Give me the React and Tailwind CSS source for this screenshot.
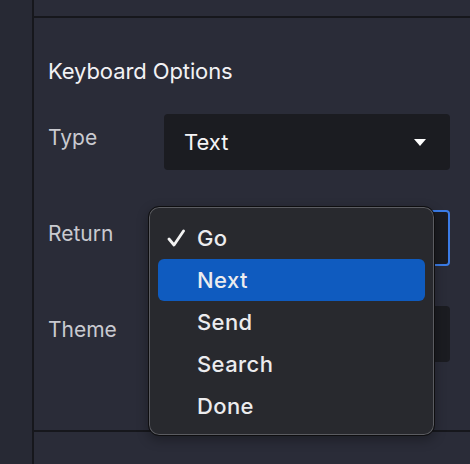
import React from "react";

function Caret() {
  return (
    <svg width="12" height="7" viewBox="0 0 12 7" className="shrink-0">
      <path d="M0 0 H12 L6 7 Z" fill="#ffffff" />
    </svg>
  );
}

function Check() {
  return (
    <svg width="18" height="18" viewBox="0 0 18 18" className="shrink-0">
      <path d="M2 10 L7 16 L16.5 2" fill="none" stroke="#f2f2f2" strokeWidth="2.8" strokeLinecap="round" strokeLinejoin="round" />
    </svg>
  );
}

const items = ["Go", "Next", "Send", "Search", "Done"];

export default function App() {
  return (
    <div
      className="relative flex w-[470px] h-[464px] overflow-hidden bg-[#282a35]"
      style={{ fontFamily: "Inter, 'Noto Sans', sans-serif" }}
    >
      <div className="w-[34px] shrink-0 bg-[#272934] border-r-2 border-[#16171c]" />
      <div className="flex-1 flex flex-col bg-[#2a2c38]">
        <div className="h-[18px] shrink-0 border-b-2 border-[#16171c]" />
        <div className="flex flex-col pl-[14px] pr-[20px] pt-[40px] h-[414px] shrink-0 border-b-2 border-[#16171c]">
          <div className="text-[22px] leading-[26px] text-[#f2f2f4] tracking-[-0.1px]">Keyboard Options</div>
          <div className="flex flex-col gap-[40px] mt-[30px]">
            <div className="flex items-center">
              <div className="w-[116px] text-[21px] text-[#c9cad0] -mt-[8px]">Type</div>
              <div className="flex-1 h-[56px] rounded-[4px] bg-[#1b1c21] flex items-center justify-between pl-[20px] pr-[24px]">
                <span className="text-[22px] text-[#f4f4f6]">Text</span>
                <Caret />
              </div>
            </div>
            <div className="flex items-center">
              <div className="w-[116px] text-[21px] text-[#c9cad0] -mt-[8px]">Return</div>
              <div className="flex-1 h-[56px] rounded-[4px] bg-[#1b1c21] border-2 border-[#3b7ce6]" />
            </div>
            <div className="flex items-center">
              <div className="w-[116px] text-[21px] text-[#c9cad0] -mt-[8px]">Theme</div>
              <div className="flex-1 h-[56px] rounded-[4px] bg-[#1b1c21]" />
            </div>
          </div>
        </div>
      </div>

      <div className="absolute left-[148px] top-[206px] w-[287px] h-[230px] rounded-[11px] bg-[#28292e] border border-[#0e0e10] shadow-[inset_0_0_0_1px_#5b5c61,0_4px_12px_rgba(0,0,0,0.3)] px-[9px] py-[10px] flex flex-col">
        {items.map((it) => (
          <div
            key={it}
            className={
              "h-[42px] shrink-0 flex items-center rounded-[6px] " +
              (it === "Next" ? "bg-[#0f5bbf]" : "")
            }
          >
            <div className="w-[39px] flex justify-end pr-[12px]">{it === "Go" ? <Check /> : null}</div>
            <span className="text-[22px] font-medium tracking-[0.4px] text-[#ececee]">{it}</span>
          </div>
        ))}
      </div>
    </div>
  );
}
